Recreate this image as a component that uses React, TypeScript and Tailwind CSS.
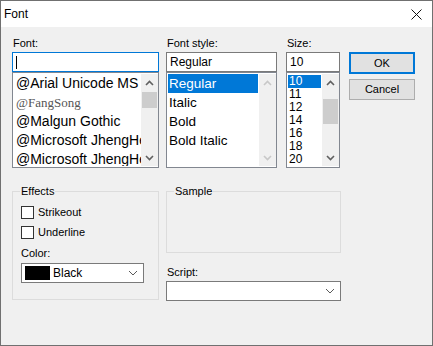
import React from 'react';

const sans = '[font-family:"Liberation_Sans",Arial,sans-serif]';

const Chevron: React.FC<{ dir: 'up' | 'down'; muted?: boolean }> = ({ dir, muted }) => (
  <svg width="9" height="6" viewBox="0 0 9 6" className="block">
    <polyline
      points={dir === 'up' ? '1,5 4.5,1.5 8,5' : '1,1 4.5,4.5 8,1'}
      fill="none"
      stroke={muted ? '#c8c8c8' : '#606060'}
      strokeWidth="1.6"
    />
  </svg>
);

const ScrollBar: React.FC<{ thumbTop?: number; thumbH?: number; muted?: boolean }> = ({ thumbTop, thumbH, muted }) => (
  <div className="w-[17px] h-full bg-[#f0f0f0] flex flex-col shrink-0">
    <div className="h-[17px] flex items-center justify-center">
      <Chevron dir="up" muted={muted} />
    </div>
    <div className="flex-1 flex flex-col">
      {thumbH ? <div className="bg-[#cdcdcd] mx-[1px]" style={{ marginTop: thumbTop, height: thumbH }} /> : null}
    </div>
    <div className="h-[17px] flex items-center justify-center">
      <Chevron dir="down" muted={muted} />
    </div>
  </div>
);

const fontNames: { name: string; cls: string }[] = [
  { name: '@Arial Unicode MS', cls: 'text-[14px] text-black' },
  { name: '@FangSong', cls: 'text-[13px] text-[#555] [font-family:"Liberation_Serif",serif]' },
  { name: '@Malgun Gothic', cls: 'text-[14px] text-black' },
  { name: '@Microsoft JhengHei', cls: 'text-[14px] text-black' },
  { name: '@Microsoft JhengHei', cls: 'text-[14px] text-black' },
];

const styles = ['Regular', 'Italic', 'Bold', 'Bold Italic'];
const sizes = ['10', '11', '12', '14', '16', '18', '20'];

const Combo: React.FC<{ children?: React.ReactNode; className?: string }> = ({ children, className }) => (
  <div className={`h-[20px] bg-white border border-[#7a7a7a] flex items-center pr-[5px] ${className ?? ''}`}>
    <div className="flex-1 flex items-center">{children}</div>
    <svg width="10" height="6" viewBox="0 0 10 6">
      <polyline points="1,1 5,5 9,1" fill="none" stroke="#5a5a5a" strokeWidth="1" />
    </svg>
  </div>
);

const App: React.FC = () => {
  return (
    <div className={`w-[433px] h-[346px] border border-[#707070] flex flex-col ${sans} text-[11px] text-black`}>
      <div className="h-[26px] bg-white flex items-center justify-between pl-[3px] pr-[10px] shrink-0">
        <span className="text-[12px]">Font</span>
        <svg width="11" height="11" viewBox="0 0 11 11">
          <path d="M0.5 0.5 L10.5 10.5 M10.5 0.5 L0.5 10.5" stroke="#111" strokeWidth="1" />
        </svg>
      </div>

      <div className="flex-1 bg-[#f0f0f0] pl-[11px] pt-[9px]">
        {/* top row */}
        <div className="flex">
          {/* font column */}
          <div className="w-[147px] flex flex-col">
            <div className="h-[16px] leading-[14px] pl-[1px]">Font:</div>
            <div className="h-[20px] bg-white border border-[#0078d7] flex items-center pl-[3px]">
              <div className="w-[1px] h-[13px] bg-black" />
            </div>
            <div className="h-[96px] bg-white border border-[#828790] flex p-[1px] pr-0">
              <div className="flex-1 overflow-hidden">
                {fontNames.map((f, i) => (
                  <div key={i} className={`h-[19px] leading-[19px] whitespace-nowrap pl-[2px] ${f.cls}`}>
                    {f.name}
                  </div>
                ))}
              </div>
              <ScrollBar thumbTop={1} thumbH={16} />
            </div>
          </div>

          {/* style column */}
          <div className="w-[111px] ml-[7px] flex flex-col">
            <div className="h-[16px] leading-[14px] pl-[1px]">Font style:</div>
            <div className="h-[20px] bg-white border border-[#7a7a7a] flex items-center pl-[3px] text-[12px]">
              Regular
            </div>
            <div className="h-[96px] bg-white border border-[#828790] flex p-[1px] pr-0">
              <div className="flex-1 overflow-hidden pr-[1px]">
                {styles.map((s, i) => (
                  <div
                    key={s}
                    className={`h-[19px] leading-[19px] pl-[1px] text-[13.5px] ${i === 0 ? 'bg-[#0078d7] text-white' : 'text-black'}`}
                  >
                    {s}
                  </div>
                ))}
              </div>
              <ScrollBar muted />
            </div>
          </div>

          {/* size column */}
          <div className="w-[54px] ml-[9px] flex flex-col">
            <div className="h-[16px] leading-[14px] pl-[1px]">Size:</div>
            <div className="h-[20px] bg-white border border-[#7a7a7a] flex items-center pl-[3px] text-[12px]">
              10
            </div>
            <div className="h-[96px] bg-white border border-[#828790] flex p-[1px] pr-0">
              <div className="flex-1 overflow-hidden pr-[1px]">
                <div className="h-[1px]" />
                {sizes.map((s, i) => (
                  <div
                    key={s}
                    className={`h-[13px] leading-[13px] pl-[1px] text-[12px] ${i === 0 ? 'bg-[#0078d7] text-white' : 'text-black'}`}
                  >
                    {s}
                  </div>
                ))}
              </div>
              <ScrollBar thumbTop={8} thumbH={25} />
            </div>
          </div>

          {/* buttons */}
          <div className="w-[66px] ml-[9px] flex flex-col pt-[16px]">
            <div className="h-[22px] bg-[#e1e1e1] border-2 border-[#0078d7] flex items-center justify-center text-[11px]">
              OK
            </div>
            <div className="h-[21px] mt-[5px] bg-[#e1e1e1] border border-[#adadad] flex items-center justify-center text-[11px]">
              Cancel
            </div>
          </div>
        </div>

        {/* bottom row */}
        <div className="flex mt-[16px]">
          <fieldset className="w-[147px] h-[116px] border border-[#dcdcdc] pl-[8px]">
            <legend className="-ml-[1px] px-[1px] leading-[14px]">Effects</legend>
            <div className="flex items-center h-[13px] mt-[8px]">
              <div className="w-[13px] h-[13px] bg-white border border-[#333]" />
              <span className="ml-[4px]">Strikeout</span>
            </div>
            <div className="flex items-center h-[13px] mt-[7px]">
              <div className="w-[13px] h-[13px] bg-white border border-[#333]" />
              <span className="ml-[4px]">Underline</span>
            </div>
            <div className="h-[14px] leading-[14px] mt-[7px]">Color:</div>
            <Combo className="w-[123px] mt-[3px]">
              <div className="w-[25px] h-[14px] bg-black ml-[3px]" />
              <span className="ml-[3px] text-[12px]">Black</span>
            </Combo>
          </fieldset>

          <div className="ml-[7px] flex flex-col">
            <fieldset className="w-[175px] h-[69px] border border-[#dcdcdc] pl-[8px]">
              <legend className="-ml-[1px] px-[1px] leading-[14px]">Sample</legend>
            </fieldset>
            <div className="h-[14px] leading-[14px] mt-[12px] pl-[1px]">Script:</div>
            <Combo className="w-[175px] mt-[2px]" />
          </div>
        </div>
      </div>
    </div>
  );
};

export default App;
